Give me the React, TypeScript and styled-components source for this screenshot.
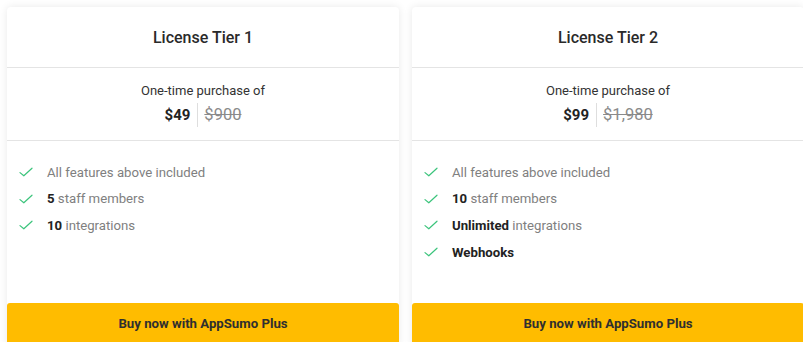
import React from "react";
import styled, { createGlobalStyle } from "styled-components";

const Global = createGlobalStyle`
  html, body { margin: 0; padding: 0; background: #ffffff; overflow: hidden; }
  body { font-family: Roboto, "Noto Sans", Arial, sans-serif; }
`;

const Page = styled.div`
  display: flex;
  gap: 13px;
  padding: 7px 0 0 7px;
  width: 803px;
  height: 342px;
  box-sizing: border-box;
  overflow: hidden;
`;

const Card = styled.div`
  flex: 0 0 392px;
  height: 340px;
  display: flex;
  flex-direction: column;
  background: #fff;
  border-radius: 4px;
  box-shadow: 0 0 8px rgba(0, 0, 0, 0.09);
  overflow: hidden;
`;

const Header = styled.div`
  height: 60px;
  display: flex;
  align-items: center;
  justify-content: center;
  border-bottom: 1px solid #e4e4e4;
  font-size: 16px;
  font-weight: 500;
  color: #2a2a2a;
`;

const PriceBlock = styled.div`
  height: 73px;
  display: flex;
  flex-direction: column;
  align-items: center;
  padding-top: 15px;
  box-sizing: border-box;
  border-bottom: 1px solid #e4e4e4;
`;

const Caption = styled.div`
  font-size: 13px;
  color: #333;
  line-height: 16px;
`;

const PriceRow = styled.div`
  display: flex;
  align-items: center;
  margin-top: 4px;
  height: 24px;
`;

const Price = styled.span`
  font-size: 15px;
  font-weight: 700;
  color: #222;
  padding-right: 7px;
`;

const OldPrice = styled.span`
  font-size: 16.5px;
  color: #8a8a8a;
  text-decoration: line-through;
  padding-left: 6px;
  border-left: 1px solid #dedede;
  line-height: 24px;
`;

const Features = styled.ul`
  flex: 1;
  list-style: none;
  margin: 0;
  padding: 21px 0 0 12px;
  display: flex;
  flex-direction: column;
  gap: 6.7px;
`;

const Feature = styled.li`
  display: flex;
  align-items: center;
  height: 20px;
  font-size: 13.2px;
  color: #808080;
`;

const Strong = styled.b`
  font-weight: 700;
  color: #222;
`;

const CheckWrap = styled.span`
  width: 28px;
  display: inline-flex;
  align-items: center;
`;

const BuyButton = styled.button`
  height: 44px;
  flex: 0 0 44px;
  border: 0;
  border-radius: 3px 3px 0 0;
  background: #ffbc00;
  font-family: Roboto, Arial, sans-serif;
  font-size: 13.2px;
  font-weight: 700;
  color: #2f2f2f;
  padding: 0 0 3px;
  cursor: pointer;
`;

const Check = () => (
  <CheckWrap>
    <svg width="14" height="10" viewBox="0 0 14 10">
      <polyline
        points="1,5.6 4.8,8.8 13,1.2"
        fill="none"
        stroke="#3cc47c"
        strokeWidth="1.2"
        strokeLinecap="round"
        strokeLinejoin="round"
      />
    </svg>
  </CheckWrap>
);

type Item = { bold?: string; text?: string };
type Tier = { title: string; price: string; old: string; items: Item[] };

const tiers: Tier[] = [
  {
    title: "License Tier 1",
    price: "$49",
    old: "$900",
    items: [
      { text: "All features above included" },
      { bold: "5", text: "staff members" },
      { bold: "10", text: "integrations" },
    ],
  },
  {
    title: "License Tier 2",
    price: "$99",
    old: "$1,980",
    items: [
      { text: "All features above included" },
      { bold: "10", text: "staff members" },
      { bold: "Unlimited", text: "integrations" },
      { bold: "Webhooks" },
    ],
  },
];

export default function App() {
  return (
    <>
      <Global />
      <Page>
        {tiers.map((t) => (
          <Card key={t.title}>
            <Header>{t.title}</Header>
            <PriceBlock>
              <Caption>One-time purchase of</Caption>
              <PriceRow>
                <Price>{t.price}</Price>
                <OldPrice>{t.old}</OldPrice>
              </PriceRow>
            </PriceBlock>
            <Features>
              {t.items.map((it, i) => (
                <Feature key={i}>
                  <Check />
                  <span>
                    {it.bold && <Strong>{it.bold}</Strong>}
                    {it.bold && it.text ? " " : ""}
                    {it.text}
                  </span>
                </Feature>
              ))}
            </Features>
            <BuyButton>Buy now with AppSumo Plus</BuyButton>
          </Card>
        ))}
      </Page>
    </>
  );
}
